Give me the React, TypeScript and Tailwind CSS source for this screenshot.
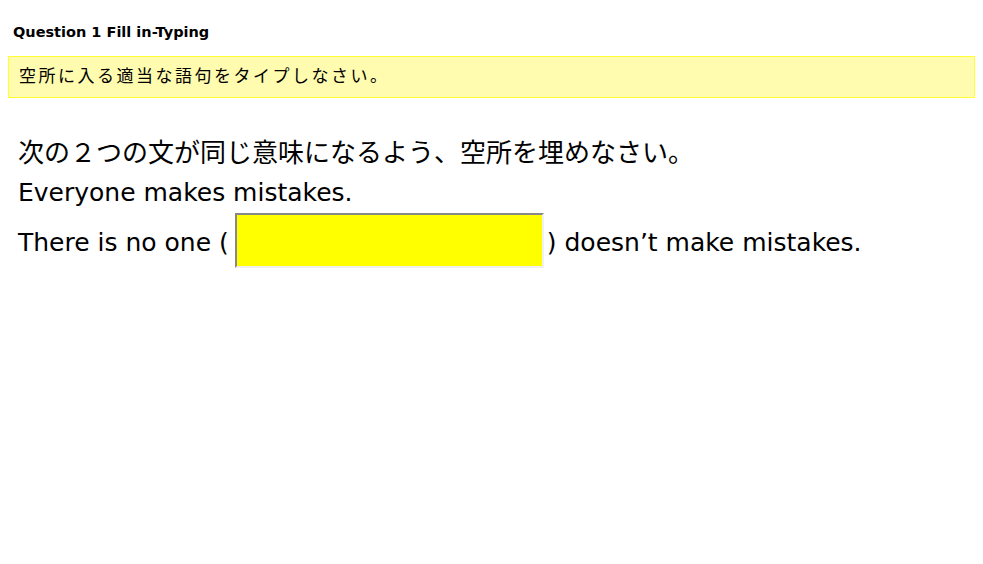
import { useState } from 'react';

const font = '"DejaVu Sans", "Noto Sans CJK JP", sans-serif';

export default function App() {
  const [answer, setAnswer] = useState('');

  return (
    <div className="min-h-[564px] bg-white text-black" style={{ fontFamily: font }}>
      {/* 問題タイトル */}
      <div className="pt-[24px] pl-[13px] pb-[16px] text-[14.5px] font-bold leading-4">
        Question 1 Fill in-Typing
      </div>

      {/* 指示 */}
      <div className="mx-[8px] h-[42px] flex items-center pl-[10px] border border-[#ffff33] bg-[#fffbaf] text-[17px] tracking-[2.5px]">
        空所に入る適当な語句をタイプしなさい。
      </div>

      {/* 本文 */}
      <div className="pl-[18px] pt-[35px] text-[25px] leading-[40px]">
        <div className="text-[26px]">次の２つの文が同じ意味になるよう、空所を埋めなさい。</div>
        <div>Everyone makes mistakes.</div>
        <div className="flex items-end">
          <span>There is no one (</span>
          <input
            type="text"
            value={answer}
            onChange={(e) => setAnswer(e.target.value)}
            className="ml-[6px] w-[309px] h-[55px] mb-[-5px] bg-[#ffff00] border-2 border-t-[#888888] border-l-[#888888] border-r-[#f0f0f0] border-b-[#f0f0f0] outline-none px-1 text-[25px]"
          />
          <span className="ml-[3px]">) doesn’t make mistakes.</span>
        </div>
      </div>
    </div>
  );
}
